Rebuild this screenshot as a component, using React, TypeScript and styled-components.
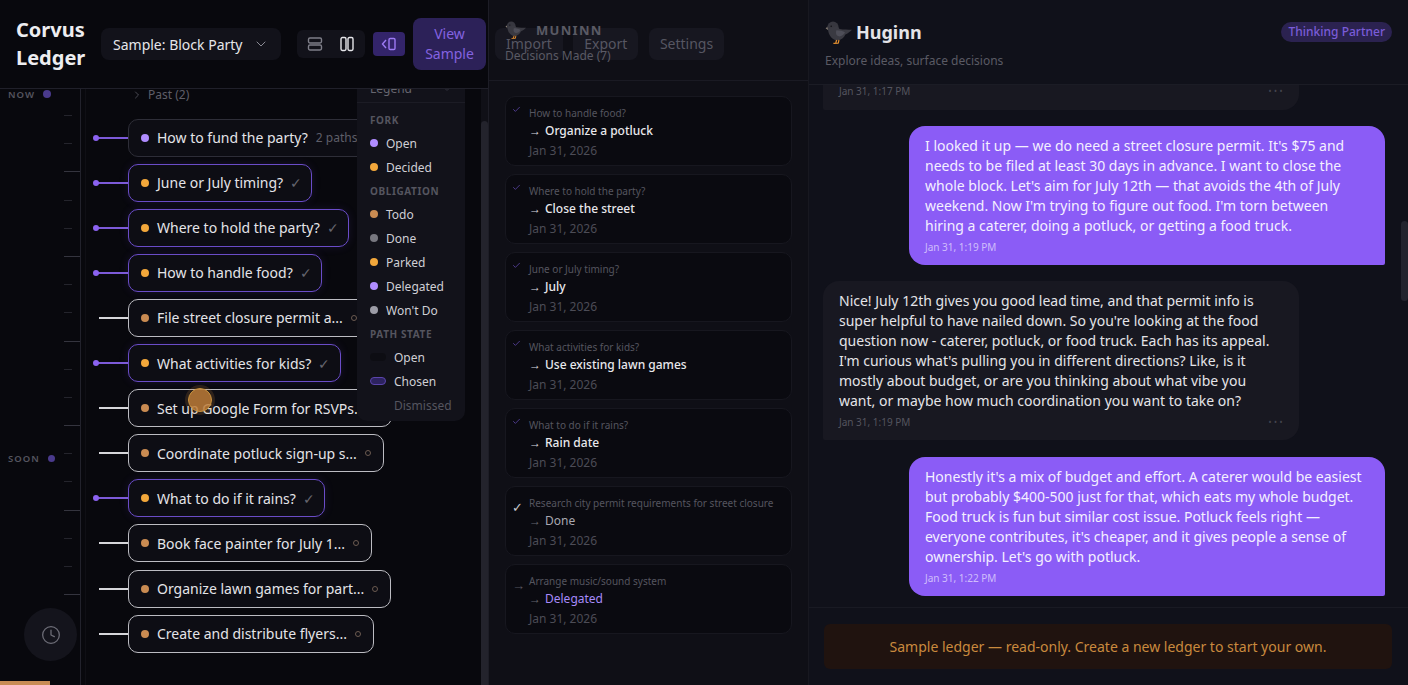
import React, { FC } from "react";
import styled, { createGlobalStyle } from "styled-components";
import { Check, ChevronDown, ChevronRight, Clock } from "lucide-react";

const GlobalStyle = createGlobalStyle`
  html, body { margin: 0; padding: 0; height: 100%; background: #08080d; }
  body { font-family: "Noto Sans", "Liberation Sans", sans-serif; overflow: hidden; }
  * { box-sizing: border-box; }
`;

type Kind = "open" | "decided" | "todo" | "done" | "parked" | "delegated" | "wont";

const dotColors: Record<Kind, string> = {
  open: "#b08cff",
  decided: "#f2a73b",
  todo: "#c98b52",
  done: "#77777f",
  parked: "#f2a73b",
  delegated: "#b08cff",
  wont: "#9c9ca6",
};

const nodes = [
  { text: "How to fund the party?", kind: "open" as Kind, tone: "fork", extra: "2 paths", width: 250 },
  { text: "June or July timing?", kind: "decided" as Kind, tone: "chosen", width: 184 },
  { text: "Where to hold the party?", kind: "decided" as Kind, tone: "chosen", width: 221 },
  { text: "How to handle food?", kind: "decided" as Kind, tone: "chosen", width: 194 },
  { text: "File street closure permit a...", kind: "todo" as Kind, tone: "task", width: 242 },
  { text: "What activities for kids?", kind: "decided" as Kind, tone: "chosen", width: 213 },
  { text: "Set up Google Form for RSVPs.", kind: "todo" as Kind, tone: "task", width: 264 },
  { text: "Coordinate potluck sign-up s...", kind: "todo" as Kind, tone: "task", width: 256 },
  { text: "What to do if it rains?", kind: "decided" as Kind, tone: "chosen", width: 197 },
  { text: "Book face painter for July 1...", kind: "todo" as Kind, tone: "task", width: 244 },
  { text: "Organize lawn games for part...", kind: "todo" as Kind, tone: "task", width: 263 },
  { text: "Create and distribute flyers...", kind: "todo" as Kind, tone: "task", width: 246 },
];

const decisions = [
  { q: "How to handle food?", a: "Organize a potluck", mark: "check" },
  { q: "Where to hold the party?", a: "Close the street", mark: "check" },
  { q: "June or July timing?", a: "July", mark: "check" },
  { q: "What activities for kids?", a: "Use existing lawn games", mark: "check" },
  { q: "What to do if it rains?", a: "Rain date", mark: "check" },
  { q: "Research city permit requirements for street closure", a: "Done", mark: "done" },
  { q: "Arrange music/sound system", a: "Delegated", mark: "delegated" },
];

const Bird: FC<{ width: number }> = ({ width }) => (
  <svg width={width} height={(width * 23) / 27} viewBox="0 0 27 23">
    <path d="M0.6 7.2 L3 5.6 L3 9 Z" fill="#8a8078" />
    <circle cx="8" cy="6.2" r="5.6" fill="#37373f" />
    <path d="M3 8 C3.4 15 8 19.6 12.6 19.4 C16.4 19.2 19 16.6 20.4 13.6 C22.6 12.6 25 11 27 8.8 C23 8.6 19 8.8 14.6 8 L12 5 Z" fill="#3a3a42" />
    <path d="M11.4 9.2 C14.6 9.2 18.4 10 20 11.6 C18.2 15 14.4 16.4 12 14.6 C10.8 13.4 10.8 10.8 11.4 9.2 Z" fill="#4e4e58" />
    <circle cx="6.2" cy="5.2" r="0.8" fill="#101014" />
    <path d="M11.6 19 L10.8 22 M14 19 L13.2 22.4 M8.4 22.4 L13.4 22.2" stroke="#e48f2f" strokeWidth="1.2" fill="none" />
  </svg>
);

const RowsIcon = () => (
  <svg width="16" height="16" viewBox="0 0 16 16" fill="none" stroke="currentColor" strokeWidth="1.4">
    <rect x="1.5" y="2" width="13" height="5" rx="1.4" />
    <rect x="1.5" y="9" width="13" height="5" rx="1.4" />
  </svg>
);

const ColumnsIcon = () => (
  <svg width="16" height="16" viewBox="0 0 16 16" fill="none" stroke="currentColor" strokeWidth="1.4">
    <rect x="2" y="1.5" width="5" height="13" rx="1.4" />
    <rect x="9" y="1.5" width="5" height="13" rx="1.4" />
  </svg>
);

const PanelIcon = () => (
  <svg width="16" height="16" viewBox="0 0 16 16" fill="none" stroke="currentColor" strokeWidth="1.4">
    <path d="M5 4 L1.5 8 L5 12" />
    <rect x="8" y="2.5" width="6" height="11" rx="1.2" />
  </svg>
);

const App: FC = () => {
  return (
    <Page>
      <GlobalStyle />
      <LeftPanel>
        <TopBar>
          <Brand>Corvus<br />Ledger</Brand>
          <LedgerSelect>
            Sample: Block Party
            <ChevronDown size={16} strokeWidth={1.5} color="#8a8a94" />
          </LedgerSelect>
          <ViewGroup>
            <ViewButton><RowsIcon /></ViewButton>
            <ViewButton $active><ColumnsIcon /></ViewButton>
          </ViewGroup>
          <PanelToggle><PanelIcon /></PanelToggle>
          <SampleButton>View Sample</SampleButton>
          <GhostButton>Import</GhostButton>
          <GhostButton>Export</GhostButton>
          <GhostButton>Settings</GhostButton>
        </TopBar>
        <Body>
          <Rail>
            <TimeMark $top={5}>NOW<TimeDot /></TimeMark>
            <TimeMark $top={369}>SOON<TimeDot $small /></TimeMark>
            {Array.from({ length: 18 }).map((_, i) => (
              <Tick key={i} $long={i % 3 === 2} />
            ))}
            <ClockButton><Clock size={20} strokeWidth={1.5} /></ClockButton>
          </Rail>
          <NodeList>
            <PastRow>
              <ChevronRight size={12} strokeWidth={1.5} />
              <span>Past (2)</span>
            </PastRow>
            {nodes.map((n) => (
              <NodeRow key={n.text}>
                <Connector $tone={n.tone}>
                  {n.tone !== "task" && <ConnectorDot />}
                  <ConnectorLine $tone={n.tone} />
                </Connector>
                <NodeCard $tone={n.tone} $width={n.width}>
                  <StatusDot $kind={n.kind} />
                  <NodeText>{n.text}</NodeText>
                  {n.extra && <NodeExtra>{n.extra}</NodeExtra>}
                  {n.tone === "chosen" && <NodeCheck>✓</NodeCheck>}
                  {n.tone === "task" && <NodeRing />}
                </NodeCard>
              </NodeRow>
            ))}
            <Legend>
              <LegendHead>Legend<ChevronDown size={12} color="#33333d" /></LegendHead>
              <LegendBody>
                <LegendTitle>FORK</LegendTitle>
                <LegendRow><StatusDot $kind="open" />Open</LegendRow>
                <LegendRow><StatusDot $kind="decided" />Decided</LegendRow>
                <LegendTitle>OBLIGATION</LegendTitle>
                <LegendRow><StatusDot $kind="todo" />Todo</LegendRow>
                <LegendRow><StatusDot $kind="done" />Done</LegendRow>
                <LegendRow><StatusDot $kind="parked" />Parked</LegendRow>
                <LegendRow><StatusDot $kind="delegated" />Delegated</LegendRow>
                <LegendRow><StatusDot $kind="wont" />Won't Do</LegendRow>
                <LegendTitle>PATH STATE</LegendTitle>
                <LegendRow><Swatch $state="open" />Open</LegendRow>
                <LegendRow><Swatch $state="chosen" />Chosen</LegendRow>
                <LegendRow $dim><Swatch $state="dismissed" />Dismissed</LegendRow>
              </LegendBody>
            </Legend>
          </NodeList>
          <ScrollTrack><ScrollThumb /></ScrollTrack>
        </Body>
        <ProgressBar />
        <CursorHalo />
      </LeftPanel>

      <MiddlePanel>
        <MiddleHead>
          <MuninnTitle><FadedBird><Bird width={21} /></FadedBird>MUNINN</MuninnTitle>
          <MuninnSub>Decisions Made (7)</MuninnSub>
        </MiddleHead>
        <DecisionList>
          {decisions.map((d) => (
            <DecisionCard key={d.q}>
              <DecisionMark $mark={d.mark}>
                {d.mark === "check" && <Check size={9} strokeWidth={1.6} />}
                {d.mark === "done" && "✓"}
                {d.mark === "delegated" && "→"}
              </DecisionMark>
              <DecisionBody>
                <Question>{d.q}</Question>
                <Answer $mark={d.mark}><Arrow $mark={d.mark}>→</Arrow>{d.a}</Answer>
                <DecisionDate>Jan 31, 2026</DecisionDate>
              </DecisionBody>
            </DecisionCard>
          ))}
        </DecisionList>
      </MiddlePanel>

      <RightPanel>
        <ChatHead>
          <ChatTitleRow>
            <ChatTitle><Bird width={27} />Huginn</ChatTitle>
            <Pill>Thinking Partner</Pill>
          </ChatTitleRow>
          <ChatSub>Explore ideas, surface decisions</ChatSub>
        </ChatHead>
        <ChatScroll>
          <Bubble $clipped>
            <BubbleFoot $clipped><span>Jan 31, 1:17 PM</span><Dots>•••</Dots></BubbleFoot>
          </Bubble>
          <Bubble $user>
            I looked it up — we do need a street closure permit. It's $75 and needs to be filed at least 30 days in advance. I want to close the whole block. Let's aim for July 12th — that avoids the 4th of July weekend. Now I'm trying to figure out food. I'm torn between hiring a caterer, doing a potluck, or getting a food truck.
            <BubbleFoot $user><span>Jan 31, 1:19 PM</span></BubbleFoot>
          </Bubble>
          <Bubble>
            Nice! July 12th gives you good lead time, and that permit info is super helpful to have nailed down. So you're looking at the food question now - caterer, potluck, or food truck. Each has its appeal. I'm curious what's pulling you in different directions? Like, is it mostly about budget, or are you thinking about what vibe you want, or maybe how much coordination you want to take on?
            <BubbleFoot><span>Jan 31, 1:19 PM</span><Dots>•••</Dots></BubbleFoot>
          </Bubble>
          <Bubble $user>
            Honestly it's a mix of budget and effort. A caterer would be easiest but probably $400-500 just for that, which eats my whole budget. Food truck is fun but similar cost issue. Potluck feels right — everyone contributes, it's cheaper, and it gives people a sense of ownership. Let's go with potluck.
            <BubbleFoot $user><span>Jan 31, 1:22 PM</span></BubbleFoot>
          </Bubble>
          <ChatThumb />
        </ChatScroll>
        <ChatFooter>
          <ReadOnlyBanner>Sample ledger — read-only. Create a new ledger to start your own.</ReadOnlyBanner>
        </ChatFooter>
      </RightPanel>
    </Page>
  );
};

export default App;

//---------------------------------styled component-----------------------------------
const Page = styled.div`
  display: grid;
  grid-template-columns: 489px 320px 599px;
  width: 1408px;
  height: 685px;
  overflow: hidden;
  background: #08080d;
`;

/* left */
const LeftPanel = styled.div`
  position: relative;
  display: flex;
  flex-direction: column;
  height: 685px;
  border-right: 1px solid #1d1d26;
  background: #08080d;
`;
const TopBar = styled.div`
  position: relative;
  z-index: 3;
  flex: none;
  display: flex;
  align-items: center;
  height: 89px;
  width: 488px;
  padding-left: 16px;
  border-bottom: 1px solid #20202a;
`;
const Brand = styled.div`
  flex: none;
  width: 85px;
  font-size: 20px;
  line-height: 28px;
  font-weight: 700;
  color: #ededf0;
`;
const LedgerSelect = styled.div`
  flex: none;
  display: flex;
  align-items: center;
  justify-content: space-between;
  width: 180px;
  height: 32px;
  padding: 0 12px;
  border-radius: 8px;
  background: #12121a;
  color: #e6e6ea;
  font-size: 14px;
`;
const ViewGroup = styled.div`
  flex: none;
  display: flex;
  gap: 0;
  height: 28px;
  margin-left: 16px;
  padding: 0 2px;
  border-radius: 6px;
  background: #12121a;
`;
const ViewButton = styled.div<{ $active?: boolean }>`
  display: flex;
  align-items: center;
  justify-content: center;
  width: 32px;
  color: ${(p) => (p.$active ? "#e6e6ea" : "#7e7e88")};
`;
const PanelToggle = styled.div`
  flex: none;
  display: flex;
  align-items: center;
  justify-content: center;
  width: 32px;
  height: 24px;
  margin-left: 8px;
  border-radius: 4px;
  background: #33246a;
  color: #9d7bf5;
`;
const SampleButton = styled.div`
  flex: none;
  width: 73px;
  height: 52px;
  margin-left: 8px;
  padding: 6px 8px;
  border-radius: 8px;
  background: #2c2158;
  color: #8463e0;
  font-size: 14px;
  line-height: 20px;
  text-align: center;
`;
const GhostButton = styled.div`
  flex: none;
  height: 32px;
  margin-left: 10.5px;
  padding: 0 11px;
  border-radius: 8px;
  background: #171720;
  color: #565662;
  font-size: 14px;
  line-height: 32px;
  ${SampleButton} + & {
    margin-left: 9px;
  }
`;
const Body = styled.div`
  flex: 1;
  min-height: 0;
  display: flex;
  overflow: hidden;
`;
const Rail = styled.div`
  position: relative;
  flex: none;
  width: 81px;
  padding-top: 12px;
  border-right: 1px solid #22222c;
`;
const TimeMark = styled.div<{ $top: number }>`
  position: absolute;
  top: ${(p) => p.$top - 6}px;
  left: 8px;
  display: flex;
  align-items: center;
  gap: 8px;
  height: 12px;
  font-size: 9.5px;
  font-weight: 600;
  letter-spacing: 1px;
  color: #55555f;
`;
const TimeDot = styled.span<{ $small?: boolean }>`
  width: ${(p) => (p.$small ? 7 : 8)}px;
  height: ${(p) => (p.$small ? 7 : 8)}px;
  border-radius: 50%;
  background: #4a3a8c;
`;
const Tick = styled.div<{ $long?: boolean }>`
  height: 28.2px;
  display: flex;
  justify-content: flex-end;
  padding-right: ${(p) => (p.$long ? 0 : 8)}px;
  &::before {
    content: "";
    width: ${(p) => (p.$long ? 16 : 8)}px;
    height: 1px;
    margin-top: 14px;
    background: ${(p) => (p.$long ? "#34343e" : "#24242c")};
  }
`;
const ClockButton = styled.div`
  position: absolute;
  left: 24px;
  top: 519px;
  display: flex;
  align-items: center;
  justify-content: center;
  width: 53px;
  height: 53px;
  border-radius: 50%;
  background: #14141c;
  color: #6e6e78;
`;
const NodeList = styled.div`
  position: relative;
  flex: 1;
  min-width: 0;
  padding-left: 7px;
  border-left: 1px solid #0f0f15;
  margin-left: 4px;
`;
const PastRow = styled.div`
  display: flex;
  align-items: center;
  gap: 5px;
  height: 12px;
  margin-bottom: 17.6px;
  padding-left: 38px;
  color: #5e5e68;
  font-size: 12px;
  line-height: 12px;
  span {
    white-space: nowrap;
  }
`;
const NodeRow = styled.div`
  display: flex;
  align-items: center;
  height: 38px;
  margin-bottom: 7.1px;
`;
const Connector = styled.div<{ $tone: string }>`
  position: relative;
  flex: none;
  display: flex;
  align-items: center;
  width: 35px;
  padding-left: ${(p) => (p.$tone === "task" ? 6 : 3)}px;
`;
const ConnectorDot = styled.span`
  position: absolute;
  left: 0;
  width: 6px;
  height: 6px;
  border-radius: 50%;
  background: #8b62f0;
`;
const ConnectorLine = styled.span<{ $tone: string }>`
  flex: 1;
  height: 2px;
  background: ${(p) => (p.$tone === "task" ? "#d6d6da" : "#7c5ad8")};
`;
const NodeCard = styled.div<{ $tone: string; $width: number }>`
  flex: none;
  display: flex;
  align-items: center;
  gap: 8px;
  width: ${(p) => p.$width}px;
  height: 38px;
  padding: 0 12px;
  border-radius: 10px;
  background: #0d0d14;
  border: 1px solid ${(p) => (p.$tone === "chosen" ? "#6a4cc8" : p.$tone === "task" ? "#bcbcc2" : "#2e2e38")};
  box-shadow: ${(p) => (p.$tone === "chosen" ? "0 0 10px rgba(110,80,210,0.14)" : "none")};
  white-space: nowrap;
  overflow: hidden;
`;
const StatusDot = styled.span<{ $kind: Kind }>`
  flex: none;
  width: 8px;
  height: 8px;
  border-radius: 50%;
  background: ${(p) => dotColors[p.$kind]};
`;
const NodeText = styled.span`
  font-size: 14px;
  color: #e4e4e8;
`;
const NodeExtra = styled.span`
  font-size: 12px;
  color: #5e5e68;
`;
const NodeCheck = styled.span`
  margin-left: -1px;
  font-size: 14px;
  color: #66666f;
`;
const NodeRing = styled.span`
  flex: none;
  width: 6px;
  height: 6px;
  border-radius: 50%;
  border: 1px solid #6b5a50;
`;
const Legend = styled.div`
  position: absolute;
  left: 271px;
  top: -14px;
  width: 108px;
  height: 346px;
  border-radius: 10px;
  background: #12121a;
  color: #cfcfd5;
  font-size: 12px;
`;
const LegendHead = styled.div`
  display: flex;
  align-items: center;
  justify-content: space-between;
  height: 28px;
  padding: 0 12px 0 13px;
  border-bottom: 1px solid #1c1c25;
  color: #66666f;
`;
const LegendBody = styled.div`
  padding: 5px 0 0 13px;
`;
const LegendTitle = styled.div`
  height: 23px;
  line-height: 25px;
  font-size: 10px;
  font-weight: 700;
  letter-spacing: 0.6px;
  color: #55555f;
`;
const LegendRow = styled.div<{ $dim?: boolean }>`
  display: flex;
  align-items: center;
  gap: 8px;
  height: 24px;
  color: ${(p) => (p.$dim ? "#55555f" : "#cfcfd5")};
`;
const Swatch = styled.span<{ $state: string }>`
  flex: none;
  width: 16px;
  height: 8px;
  border-radius: 4px;
  background: ${(p) => (p.$state === "chosen" ? "#2d2360" : p.$state === "open" ? "#0d0d13" : "transparent")};
  border: 1px solid ${(p) => (p.$state === "chosen" ? "#5b45ad" : "transparent")};
`;
const ScrollTrack = styled.div`
  flex: none;
  width: 7px;
  padding-top: 32px;
  background: #101017;
`;
const ScrollThumb = styled.div`
  height: 100%;
  border-radius: 4px 4px 0 0;
  background: #23232c;
`;
const ProgressBar = styled.div`
  position: absolute;
  left: 0;
  bottom: 0;
  width: 50px;
  height: 4px;
  background: #c98c55;
`;
const CursorHalo = styled.div`
  position: absolute;
  left: 188px;
  top: 388px;
  width: 24px;
  height: 24px;
  border-radius: 50%;
  background: rgba(190, 125, 55, 0.85);
  border: 1px solid #c8923e;
  box-shadow: 0 0 0 3px rgba(200, 132, 60, 0.18);
`;

/* middle */
const MiddlePanel = styled.div`
  display: flex;
  flex-direction: column;
  height: 685px;
  border-right: 1px solid #181820;
  background: #0f0f16;
`;
const MiddleHead = styled.div`
  position: relative;
  z-index: 4;
  flex: none;
  height: 81px;
  padding: 20px 0 0 16px;
  border-bottom: 1px solid #1a1a23;
`;
const MuninnTitle = styled.div`
  display: flex;
  align-items: center;
  gap: 10px;
  height: 20px;
  font-size: 13px;
  font-weight: 700;
  letter-spacing: 1.3px;
  color: #5a5a64;
`;
const FadedBird = styled.span`
  display: flex;
`;
const MuninnSub = styled.div`
  margin-top: 7px;
  font-size: 12px;
  line-height: 18px;
  color: #5a5a64;
`;
const DecisionList = styled.div`
  flex: 1;
  display: flex;
  flex-direction: column;
  gap: 8px;
  padding: 15px 16px 0;
`;
const DecisionCard = styled.div`
  display: flex;
  height: 70px;
  border-radius: 10px;
  background: #0a0a10;
  border: 1px solid #17171f;
`;
const DecisionMark = styled.div<{ $mark: string }>`
  flex: none;
  width: 23px;
  padding: ${(p) => (p.$mark === "check" ? "5px 0 0 6px" : "13px 0 0 6px")};
  font-size: 13px;
  line-height: 14px;
  color: ${(p) => (p.$mark === "check" ? "#7558d8" : p.$mark === "done" ? "#c8c8ce" : "#55555f")};
`;
const DecisionBody = styled.div`
  padding-top: 9px;
`;
const Question = styled.div`
  font-size: 10px;
  line-height: 15px;
  color: #55555f;
`;
const Answer = styled.div<{ $mark: string }>`
  margin-top: 1px;
  font-size: 12px;
  line-height: 17px;
  font-weight: ${(p) => (p.$mark === "check" ? 500 : 400)};
  color: ${(p) => (p.$mark === "check" ? "#e8e8ec" : p.$mark === "done" ? "#a8a8b0" : "#a78bfa")};
`;
const Arrow = styled.span<{ $mark: string }>`
  display: inline-block;
  width: 16px;
  font-size: 12px;
  font-weight: 400;
  color: ${(p) => (p.$mark === "check" ? "#d8d8de" : "#66666f")};
`;
const DecisionDate = styled.div`
  margin-top: 3px;
  font-size: 12px;
  line-height: 17px;
  color: #4c4c56;
`;

/* right */
const RightPanel = styled.div`
  display: flex;
  flex-direction: column;
  height: 685px;
  background: #10111a;
`;
const ChatHead = styled.div`
  flex: none;
  height: 85px;
  padding: 17px 16px 0;
  border-bottom: 1px solid #1b1c25;
`;
const ChatTitleRow = styled.div`
  display: flex;
  align-items: center;
  justify-content: space-between;
  height: 30px;
`;
const ChatTitle = styled.div`
  display: flex;
  align-items: center;
  gap: 4px;
  font-size: 18px;
  font-weight: 700;
  color: #e4e4e8;
`;
const Pill = styled.div`
  height: 20px;
  padding: 0 7px 0 8px;
  border-radius: 10px;
  background: #2b2250;
  color: #7a5cd8;
  font-size: 12px;
  font-weight: 500;
  line-height: 20px;
`;
const ChatSub = styled.div`
  margin-top: 5px;
  font-size: 12px;
  line-height: 17px;
  color: #5a5a64;
`;
const ChatScroll = styled.div`
  position: relative;
  flex: 1;
  min-height: 0;
  display: flex;
  flex-direction: column;
  gap: 16.2px;
  padding: 0 23px 0 14px;
  overflow: hidden;
`;
const Bubble = styled.div<{ $user?: boolean; $clipped?: boolean }>`
  flex: none;
  width: 476px;
  align-self: ${(p) => (p.$user ? "flex-end" : "flex-start")};
  margin-top: ${(p) => (p.$clipped ? -1 : 0)}px;
  padding: ${(p) => (p.$clipped ? "0 16px 12px" : "10px 16px 11px")};
  border-radius: ${(p) => (p.$clipped ? "0 0 16px 2px" : p.$user ? "16px 16px 2px 16px" : "16px 16px 16px 2px")};
  background: ${(p) => (p.$user ? "#8b5cf6" : "#181821")};
  color: ${(p) => (p.$user ? "#f4f0ff" : "#e4e4e8")};
  font-size: 14px;
  line-height: 20px;
`;
const BubbleFoot = styled.div<{ $user?: boolean; $clipped?: boolean }>`
  display: flex;
  align-items: center;
  justify-content: space-between;
  margin-top: ${(p) => (p.$clipped ? 0 : 4)}px;
  font-size: 10px;
  line-height: 14px;
  color: ${(p) => (p.$user ? "rgba(255,255,255,0.6)" : "#55555f")};
`;
const Dots = styled.span`
  margin-right: -2px;
  font-size: 8px;
  letter-spacing: 2.5px;
  color: #44444e;
`;
const ChatThumb = styled.div`
  position: absolute;
  right: 0;
  top: 136px;
  width: 7px;
  height: 80px;
  border-radius: 4px;
  background: #23242e;
`;
const ChatFooter = styled.div`
  flex: none;
  height: 78px;
  padding: 16px 16px 0 15px;
  border-top: 1px solid #191a23;
`;
const ReadOnlyBanner = styled.div`
  height: 45px;
  border-radius: 6px;
  background: #20130f;
  color: #c98a3e;
  font-size: 14px;
  line-height: 45px;
  text-align: center;
`;
